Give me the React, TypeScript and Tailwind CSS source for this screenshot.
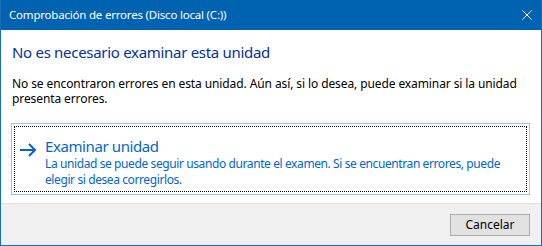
import React from "react";

const font = { fontFamily: '"Noto Sans", "Segoe UI", sans-serif' };

export default function App() {
  return (
    <div
      className="w-[542px] h-[246px] flex flex-col bg-white border-x border-b border-[#1c6cb8] overflow-hidden"
      style={font}
    >
      <div className="h-[30px] shrink-0 bg-[#0063b1] flex items-center justify-between pl-[8px] pr-[9px]">
        <span className="text-white text-[11.5px] tracking-[-0.2px] leading-none">Comprobación de errores (Disco local (C:))</span>
        <svg width="10" height="10" viewBox="0 0 10 10">
          <path d="M0.5 0.5 L9.5 9.5 M9.5 0.5 L0.5 9.5" stroke="white" strokeWidth="1" />
        </svg>
      </div>
      <div className="flex-1 flex flex-col px-[10px] pt-[12px]">
        <div className="text-[15px] tracking-[-0.3px] leading-[20px] text-[#003399] pl-[1px]">No es necesario examinar esta unidad</div>
        <div className="mt-[14px] text-[12px] tracking-[-0.1px] leading-[15px] text-black pl-[1px]">
          No se encontraron errores en esta unidad. Aún así, si lo desea, puede examinar si la unidad presenta errores.
        </div>
        <div className="mt-[17px] mr-[1px] h-[72px] border border-[#99c9ef] p-[2px]">
          <div className="h-full border border-dotted border-black flex pl-[4px] pt-[9px]">
            <svg width="18" height="14" viewBox="0 0 18 14" className="mt-[7px] shrink-0">
              <path d="M1 7 H16 M10 1 L16 7 L10 13" stroke="#0066cc" strokeWidth="2" fill="none" />
            </svg>
            <div className="ml-[8px] text-[#0066cc]">
              <div className="text-[15px] tracking-[-0.4px] leading-[20px]">Examinar unidad</div>
              <div className="text-[12px] tracking-[-0.4px] leading-[16px] whitespace-nowrap">
                La unidad se puede seguir usando durante el examen. Si se encuentran errores, puede
                <br />
                elegir si desea corregirlos.
              </div>
            </div>
          </div>
        </div>
      </div>
      <div className="h-[42px] shrink-0 bg-[#f0f0f0] border-t border-[#dfdfdf] flex items-start justify-end pr-[11px] pt-[10px]">
        <button className="w-[80px] h-[22px] bg-[#e1e1e1] border border-[#adadad] text-[12px] text-black leading-none">
          Cancelar
        </button>
      </div>
    </div>
  );
}
